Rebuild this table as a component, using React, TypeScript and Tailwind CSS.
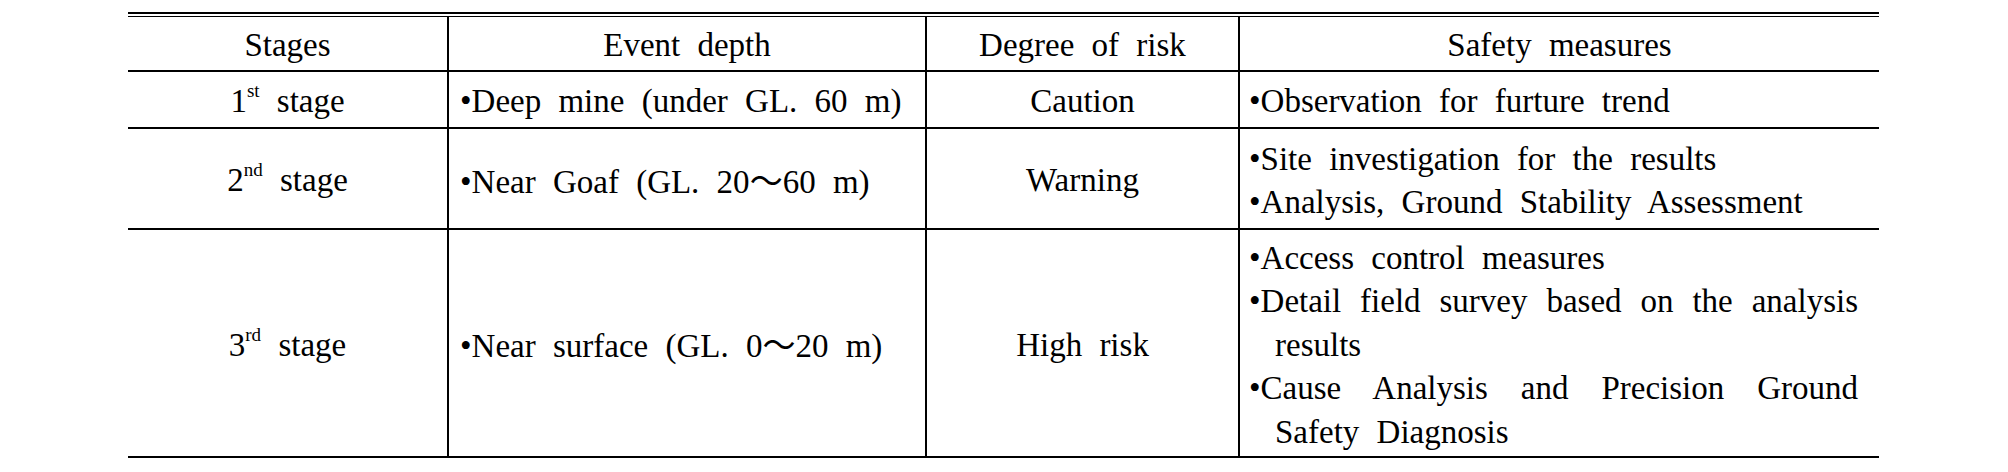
import React from "react";

function Sup({ children }: { children: React.ReactNode }) {
  return <sup className="text-[19px] relative -top-[3px] align-super leading-none">{children}</sup>;
}

function Tilde() {
  return <span className="[font-family:Noto_Sans_CJK_KR,sans-serif]">～</span>;
}

function Bullet({ children, justify }: { children: React.ReactNode; justify?: boolean }) {
  return (
    <div className={`pl-[26px] -indent-[26px] ${justify ? "text-justify" : ""}`}>
      <span className="indent-0">•</span>
      {children}
    </div>
  );
}

const cellBase = "border-black flex flex-col justify-center pt-[5px]";

export default function App() {
  return (
    <div className="w-[2008px] h-[472px] bg-white text-black [font-family:Liberation_Serif,serif] text-[33px] leading-[43.5px] [word-spacing:9px]">
      <div className="pt-[12px] pl-[128px] w-[1879px]">
        <div className="h-[2px] bg-black" />
        <div className="h-[2px]" />
        <div className="h-[1px] bg-black" />
        <div className="grid grid-cols-[321px_478px_313px_639px] grid-rows-[55px_57px_101px_228px]">
          {/* header */}
          <div className={`${cellBase} border-r-2 border-b-2 items-center`}>Stages</div>
          <div className={`${cellBase} border-r-2 border-b-2 items-center`}>Event depth</div>
          <div className={`${cellBase} border-r-2 border-b-2 items-center`}>Degree of risk</div>
          <div className={`${cellBase} border-b-2 items-center`}>Safety measures</div>

          {/* row 1 */}
          <div className={`${cellBase} border-r-2 border-b-2 items-center`}>
            <span>1<Sup>st</Sup> stage</span>
          </div>
          <div className={`${cellBase} border-r-2 border-b-2 pl-[11px]`}>
            <Bullet>Deep mine (under GL. 60 m)</Bullet>
          </div>
          <div className={`${cellBase} border-r-2 border-b-2 items-center`}>Caution</div>
          <div className={`${cellBase} border-b-2 pl-[9px] pr-[21px]`}>
            <Bullet>Observation for furture trend</Bullet>
          </div>

          {/* row 2 */}
          <div className={`${cellBase} border-r-2 border-b-2 items-center`}>
            <span>2<Sup>nd</Sup> stage</span>
          </div>
          <div className={`${cellBase} border-r-2 border-b-2 pl-[11px]`}>
            <Bullet>Near Goaf (GL. 20<Tilde />60 m)</Bullet>
          </div>
          <div className={`${cellBase} border-r-2 border-b-2 items-center`}>Warning</div>
          <div className={`${cellBase} border-b-2 pl-[9px] pr-[21px]`}>
            <Bullet>Site investigation for the results</Bullet>
            <Bullet>Analysis, Ground Stability Assessment</Bullet>
          </div>

          {/* row 3 */}
          <div className={`${cellBase} border-r-2 border-b-2 items-center`}>
            <span>3<Sup>rd</Sup> stage</span>
          </div>
          <div className={`${cellBase} border-r-2 border-b-2 pl-[11px]`}>
            <Bullet>Near surface (GL. 0<Tilde />20 m)</Bullet>
          </div>
          <div className={`${cellBase} border-r-2 border-b-2 items-center`}>High risk</div>
          <div className={`${cellBase} border-b-2 pl-[9px] pr-[21px]`}>
            <Bullet>Access control measures</Bullet>
            <Bullet justify>Detail field survey based on the analysis results</Bullet>
            <Bullet justify>Cause Analysis and Precision Ground Safety Diagnosis</Bullet>
          </div>
        </div>
      </div>
    </div>
  );
}
